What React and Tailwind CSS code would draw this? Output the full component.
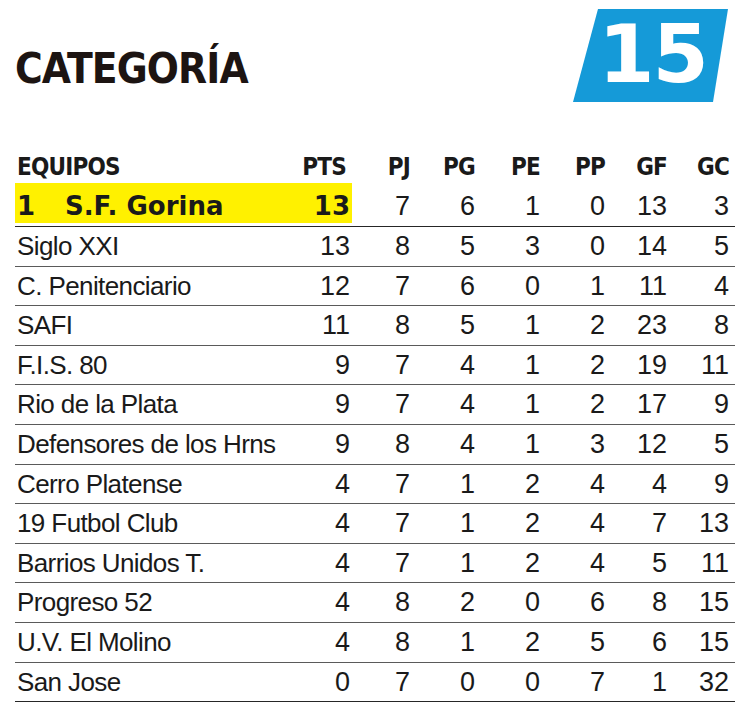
import React from "react";

const leader = { pos: 1, name: "S.F. Gorina", stats: [13, 7, 6, 1, 0, 13, 3] };

const rows = [
  ["Siglo XXI", 13, 8, 5, 3, 0, 14, 5],
  ["C. Penitenciario", 12, 7, 6, 0, 1, 11, 4],
  ["SAFI", 11, 8, 5, 1, 2, 23, 8],
  ["F.I.S. 80", 9, 7, 4, 1, 2, 19, 11],
  ["Rio de la Plata", 9, 7, 4, 1, 2, 17, 9],
  ["Defensores de los Hrns", 9, 8, 4, 1, 3, 12, 5],
  ["Cerro Platense", 4, 7, 1, 2, 4, 4, 9],
  ["19 Futbol Club", 4, 7, 1, 2, 4, 7, 13],
  ["Barrios Unidos T.", 4, 7, 1, 2, 4, 5, 11],
  ["Progreso 52", 4, 8, 2, 0, 6, 8, 15],
  ["U.V. El Molino", 4, 8, 1, 2, 5, 6, 15],
  ["San Jose", 0, 7, 0, 0, 7, 1, 32],
];

const cols = "grid grid-cols-[280px_57px_58px_65px_65px_65px_62px_62px] w-[720px] pr-[6px]";
const sans = "font-['Liberation_Sans',Arial,sans-serif]";
const narrow =
  "font-['DejaVu_Sans_Condensed','Liberation_Sans_Narrow','Liberation_Sans',sans-serif] [font-stretch:condensed]";
const heavy = "font-['DejaVu_Sans','Liberation_Sans',sans-serif] font-bold";

const App = () => {
  return (
    <div className="w-[750px] h-[710px] bg-white text-[#1a1a1a] overflow-hidden">
      {/* top: title + category badge */}
      <div className="flex items-start justify-between h-[152px]">
        <h1
          className={`${narrow} ml-[15px] mt-[47px] text-[42px] leading-[43px] font-bold tracking-[-0.9px] text-[#1c1412]`}
        >
          CATEGORÍA
        </h1>
        <div className="mt-[9px] mr-[22px] w-[155px] h-[93px] bg-[#159ad8] [clip-path:polygon(25px_0,155px_0,140px_93px,0_93px)] flex justify-center">
          <span
            className={`${heavy} pl-[4px] -mt-[1px] text-[81px] leading-[93px] tracking-[-2px] text-white`}
          >
            15
          </span>
        </div>
      </div>

      <div className="ml-[15px]">
        {/* header */}
        <div className={`${cols} ${narrow} h-[31px] text-[24px] leading-[31px] font-bold tracking-[-0.8px]`}>
          <div className="pl-[2px]">EQUIPOS</div>
          <div className="text-right pr-[6px]">PTS</div>
          <div className="text-right">PJ</div>
          <div className="text-right">PG</div>
          <div className="text-right">PE</div>
          <div className="text-right">PP</div>
          <div className="text-right">GF</div>
          <div className="text-right">GC</div>
        </div>

        {/* leader row */}
        <div className={`${cols} h-[44px] border-b border-[#262626]`}>
          <div className={`${heavy} h-[40px] bg-[#fff100] pl-[2px] pt-[7px] text-[26px] leading-[32px] flex`}>
            <span className="w-[48px]">{leader.pos}</span>
            <span>{leader.name}</span>
          </div>
          <div className={`${heavy} h-[40px] bg-[#fff100] pr-[2px] pt-[7px] text-[26px] leading-[32px] text-right`}>
            {leader.stats[0]}
          </div>
          {leader.stats.slice(1).map((v, i) => (
            <div key={i} className={`${sans} pt-[4px] text-[27px] leading-[38px] text-right`}>
              {v}
            </div>
          ))}
        </div>

        {/* the rest of the table */}
        {rows.map(([name, ...stats], idx) => (
          <div
            key={name}
            className={`${cols} h-[39.6px] border-b ${idx === rows.length - 1 ? "border-[#262626]" : "border-[#5a5a5a]"}`}
          >
            <div className={`${sans} pl-[2px] text-[26px] leading-[38px] tracking-[-0.6px] whitespace-nowrap`}>
              {name}
            </div>
            {stats.map((v, i) => (
              <div
                key={i}
                className={`${sans} text-[27px] leading-[38px] text-right ${i === 0 ? "pr-[2px]" : ""}`}
              >
                {v}
              </div>
            ))}
          </div>
        ))}
      </div>
    </div>
  );
};

export default App;
